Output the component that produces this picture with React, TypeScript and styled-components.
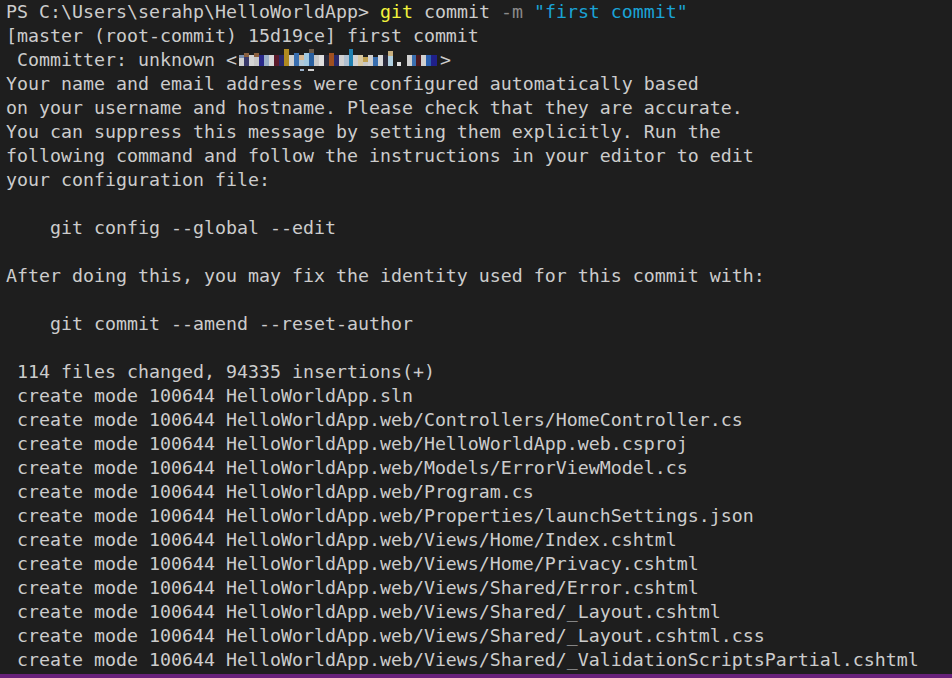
import React from "react";
import styled, { createGlobalStyle } from "styled-components";

const Global = createGlobalStyle`
  html, body { margin: 0; padding: 0; background: #1e1e1e; }
  body { overflow: hidden; }
`;

const Page = styled.div`
  width: 952px;
  height: 678px;
  display: flex;
  flex-direction: column;
  background: #1e1e1e;
  overflow: hidden;
`;

const Terminal = styled.div`
  flex: 1;
  padding: 0 0 0 6px;
  font-family: "DejaVu Sans Mono", "Liberation Mono", monospace;
  font-size: 18.27px;
  color: #cccccc;
  overflow: hidden;
`;

const Line = styled.div`
  height: 24px;
  line-height: 24px;
  white-space: pre;
`;

const StatusBar = styled.div`
  height: 4px;
  flex: none;
  background: #68217a;
`;

const Tok = styled.span<{ $c: string }>`
  color: ${(p) => p.$c};
`;

const Mosaic = styled.svg`
  display: inline-block;
  vertical-align: top;
  width: 203px;
  height: 24px;
`;

// [absolute x, width, colour, top, bottom] (top/bottom relative to line top)
const blocks: [number, number, string, number, number][] = [
  [239, 5, "#d0d0d0", 7, 18], [239, 5, "#7a90b0", 7, 10],
  [244, 5, "#3a3a6a", 7, 18], [244, 5, "#8a6040", 5, 9],
  [249, 5, "#d4d4d4", 7, 18],
  [254, 5, "#c8c8c8", 7, 18], [254, 5, "#8a6040", 5, 9],
  [259, 5, "#2a2a8a", 7, 18],
  [264, 5, "#9ab0c8", 7, 18],
  [269, 5, "#d8d8d8", 7, 18],
  [274, 5, "#5a1a2a", 7, 18],
  [279, 5, "#2a2a6a", 7, 18],
  [284, 5, "#b08a20", 1, 18],
  [289, 5, "#d0d0d0", 7, 18],
  [294, 5, "#3a6fb0", 5, 18],
  [299, 5, "#d8b890", 7, 18], [299, 5, "#b0c8d8", 12, 18],
  [304, 5, "#a0c8e0", 5, 18],
  [309, 5, "#2a60a0", 1, 18], [309, 5, "#6a5a4a", 1, 5],
  [314, 5, "#c8c8c8", 7, 18],
  [319, 5, "#e0e0e0", 7, 18],
  [324, 5, "#2a2a3a", 7, 18],
  [329, 5, "#a05020", 5, 18],
  [334, 5, "#2a2a6a", 7, 18],
  [339, 5, "#d0d0d0", 7, 18],
  [344, 5, "#b0c0d0", 7, 18],
  [349, 4, "#2080b0", 1, 18],
  [353, 5, "#d0d0d0", 7, 18],
  [358, 5, "#d8c8a0", 7, 18],
  [363, 5, "#c0a050", 9, 14], [363, 5, "#c8c8c8", 14, 18],
  [368, 5, "#d0d0d0", 7, 18],
  [373, 5, "#3a6fb0", 9, 18],
  [378, 5, "#d8d8d8", 7, 18],
  [383, 5, "#2a2a3a", 7, 18],
  [388, 5, "#c8b080", 3, 8], [388, 5, "#b0d0e0", 8, 18],
  [397, 4, "#e0e0e0", 14, 18],
  [407, 5, "#d0d0d0", 7, 18],
  [412, 4, "#3a6fb0", 7, 18],
  [416, 5, "#4a1a20", 7, 18],
  [421, 5, "#d0d0d0", 7, 18],
  [426, 5, "#2a60b0", 7, 18],
  [431, 6, "#20208a", 7, 18],
];

function Email() {
  return (
    <Mosaic viewBox="0 0 203 24">
      {blocks.map(([x, w, c, t, b], i) => (
        <rect key={i} x={x - 237} y={t} width={w} height={b - t} fill={c} />
      ))}
      <rect x={63} y={21} width={4} height={2} fill="#9ab0c8" />
      <rect x={71} y={21} width={6} height={2} fill="#d0d0d0" />
    </Mosaic>
  );
}

const files = [
  "HelloWorldApp.sln",
  "HelloWorldApp.web/Controllers/HomeController.cs",
  "HelloWorldApp.web/HelloWorldApp.web.csproj",
  "HelloWorldApp.web/Models/ErrorViewModel.cs",
  "HelloWorldApp.web/Program.cs",
  "HelloWorldApp.web/Properties/launchSettings.json",
  "HelloWorldApp.web/Views/Home/Index.cshtml",
  "HelloWorldApp.web/Views/Home/Privacy.cshtml",
  "HelloWorldApp.web/Views/Shared/Error.cshtml",
  "HelloWorldApp.web/Views/Shared/_Layout.cshtml",
  "HelloWorldApp.web/Views/Shared/_Layout.cshtml.css",
  "HelloWorldApp.web/Views/Shared/_ValidationScriptsPartial.cshtml",
];

export default function App() {
  return (
    <Page>
      <Global />
      <Terminal>
        <Line>
          {"PS C:\\Users\\serahp\\HelloWorldApp> "}
          <Tok $c="#f2f23c">git</Tok>
          {" commit "}
          <Tok $c="#8a8a8a">-m</Tok>{" "}
          <Tok $c="#1aa3d6">"first commit"</Tok>
        </Line>
        <Line>[master (root-commit) 15d19ce] first commit</Line>
        <Line>
          {" Committer: unknown <"}
          <Email />
          {">"}
        </Line>
        <Line>Your name and email address were configured automatically based</Line>
        <Line>on your username and hostname. Please check that they are accurate.</Line>
        <Line>You can suppress this message by setting them explicitly. Run the</Line>
        <Line>following command and follow the instructions in your editor to edit</Line>
        <Line>your configuration file:</Line>
        <Line> </Line>
        <Line>{"    git config --global --edit"}</Line>
        <Line> </Line>
        <Line>After doing this, you may fix the identity used for this commit with:</Line>
        <Line> </Line>
        <Line>{"    git commit --amend --reset-author"}</Line>
        <Line> </Line>
        <Line>{" 114 files changed, 94335 insertions(+)"}</Line>
        {files.map((f) => (
          <Line key={f}>{" create mode 100644 " + f}</Line>
        ))}
      </Terminal>
      <StatusBar />
    </Page>
  );
}
